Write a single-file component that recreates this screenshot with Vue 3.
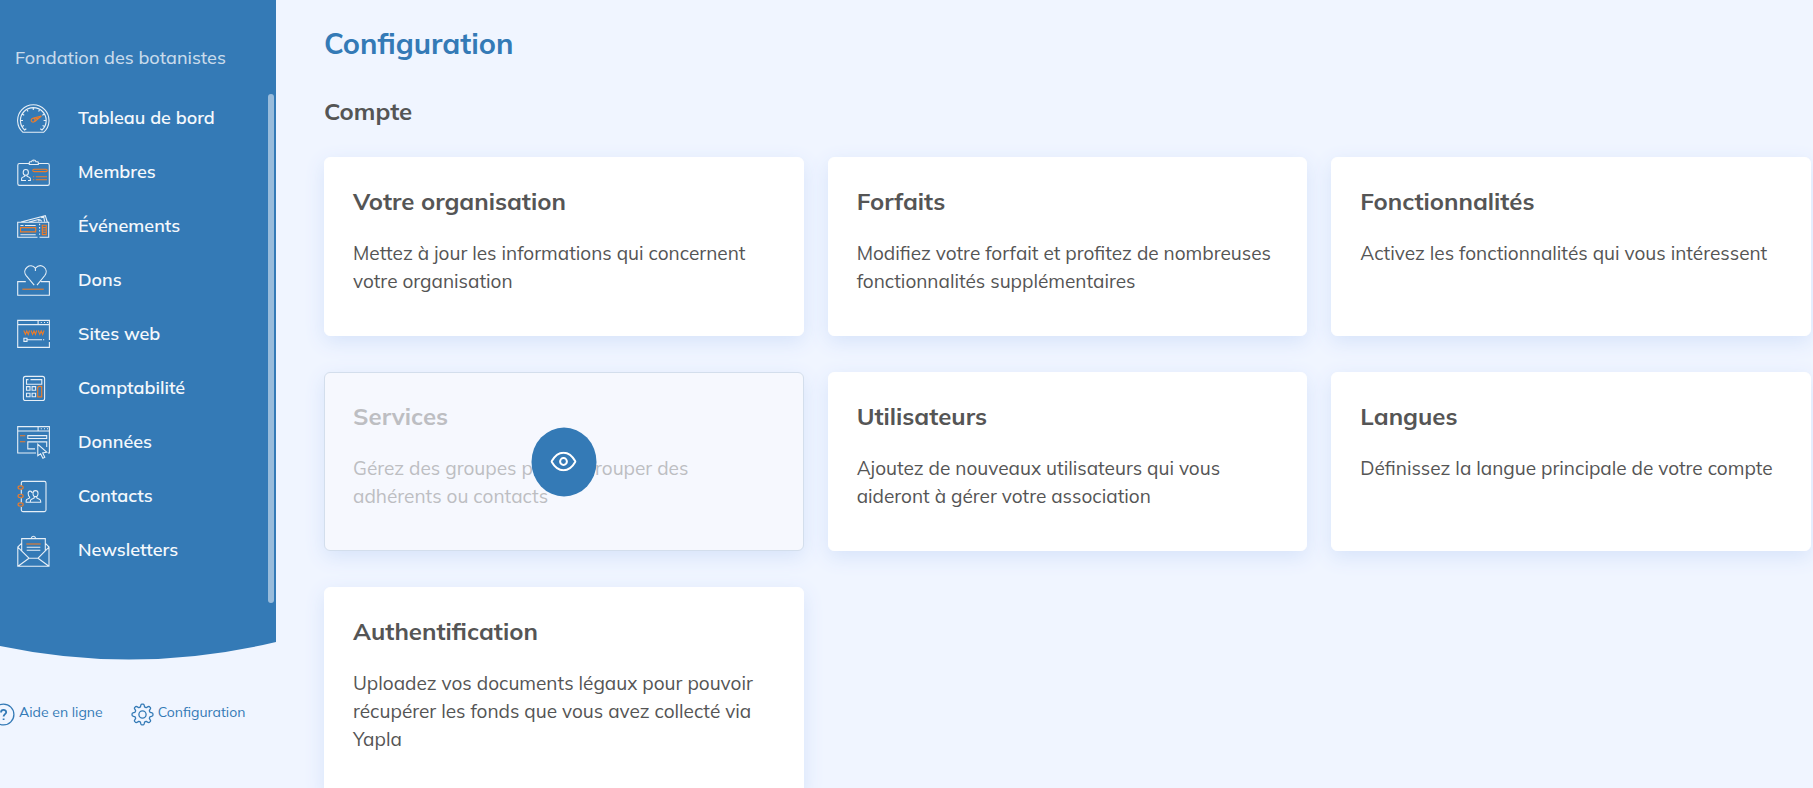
<script setup>
import { ref } from 'vue'

const organisation = ref('Fondation des botanistes')

// base = traits blancs, accent = traits orange
const menu = [
  {
    label: 'Tableau de bord',
    base: 'M6 31.3A15.7 15.7 0 1 1 26.6 31.3ZM9.3 27.8L7.6 29A12.9 12.9 0 1 1 25 29L23.3 27.8M16.3 6.6V9M9.8 8.2L11 10.4M22.8 8.2L21.6 10.4M5.1 13L7.2 14.2M27.5 13L25.4 14.2M3.4 19.5H6M29.2 19.5H26.6M5.1 25.5L7 24.6M27.5 25.5L25.6 24.6',
    accent: 'M14.2 19.2A1.9 1.9 0 1 0 18 19.2A1.9 1.9 0 1 0 14.2 19.2M15.6 17.3L24.4 15L17.8 20.6M18 18.2L21.5 16.6'
  },
  {
    label: 'Membres',
    base: 'M12 8.5H2.5Q.8 8.5 .8 10.2V28.7Q.8 30.4 2.5 30.4H30.6Q32.3 30.4 32.3 28.7V10.2Q32.3 8.5 30.6 8.5H21.5M12.3 9.5V7.5Q12.3 6.8 13.2 6.8H14.5A2.3 2.3 0 0 1 19 6.8H20.4Q21.3 6.8 21.3 7.5V9.5ZM16.7 5.8V6.4M6.2 17.4A2.6 2.9 0 1 1 11.4 17.4A2.6 2.9 0 1 1 6.2 17.4M7.8 19.8V21.2L5 22.6Q4.4 23.2 4.6 25.5H9M10 19.8V21.2L12.8 22.6Q13.6 23.2 13.4 25.5H11',
    accent: 'M17 14.2H29A1.2 1.2 0 0 1 29 16.6H17A1.2 1.2 0 0 1 17 14.2M16 21.7H17.2M18.8 21.7H30M16 24.8H17.2M18.8 24.8H30'
  },
  {
    label: 'Événements',
    base: 'M20.5 28.3H.7V13.3H31.7V28.3H22.5M4 13L28.3 6.6L30.3 13M12 13L22.5 10.2M24.2 8.8L26.8 8.2L27.6 12.5M21.4 12.2Q23 9.5 24.6 12.2M3.4 16.5H6.5M8 16.5H18.7M3.4 25.7H18.7M22.6 14.8V16.2M22.6 18V19.4M22.6 21.2V22.6M22.6 24.4V25.8',
    accent: 'M3.5 18.6H18.7V22.9H3.5ZM25.3 16.3H29.3V25.6H25.3ZM25.3 18.6H29.3M25.3 21H29.3M25.3 23.3H29.3'
  },
  {
    label: 'Dons',
    base: 'M8.8 18.6H.7V32.2H32.4V18.6H23.8M17.2 22.2L9.2 12.6C4.3 6.3 13.4-.9 18.4 5.2V8M18.4 5.2C24.2-.8 32.4 6 27.8 12.5L20 22.2',
    accent: 'M5.3 26.2H26.8'
  },
  {
    label: 'Sites web',
    base: 'M32.4 23V3.4H.7V30.4H32.4V25M.7 7.6H32.4M21.1 3.4V7.6M23.8 5.5H24.8M27 5.5H28M30 5.5H31M6.9 21.3H10V24.4H6.9ZM10 22.8H25M26 22.8H27.2',
    accent: 'M6.8 13.5L8.4 17.4L9.8 14L11.3 17.4L12.5 13.5M14 13.5L15.6 17.4L17 14L18.5 17.4L19.7 13.5M21.2 13.5L22.8 17.4L24.2 14L25.7 17.4L27 13.5'
  },
  {
    label: 'Comptabilité',
    base: 'M8.5 5.4H25.5Q27.6 5.4 27.6 7.5V27.4Q27.6 29.5 25.5 29.5H8.5Q6.4 29.5 6.4 27.4V7.5Q6.4 5.4 8.5 5.4M13.5 8.6H24.8V13.3H9.5V8.6H11.5M9.5 15.6H13V19.2H9.5ZM15.1 15.6H18.6V19.2H15.1ZM9.5 22.2H13V25.8H9.5ZM15.1 22.2H18.6V25.8H15.1Z',
    accent: 'M21.8 15.4H24.7V25.9H20.7V16.5Z'
  },
  {
    label: 'Données',
    base: 'M19 28H.7V1.6H32.4V28H31M.7 6H32.4M21.1 1.6V6M23.8 3.8H24.8M27 3.8H28M30 3.8H31M10.8 10.6H29.7V13.5H10.8ZM18 23.9H10.8V16.9H29.7V22M20.8 19.3V30.8L23.6 28.8L25.9 33.2L27.8 32.2L25.7 28L29.7 27.2Z',
    accent: 'M2.9 10.8H8.3M2.9 16.7H8.3'
  },
  {
    label: 'Contacts',
    base: 'M4.3 6.5V4Q4.3 2.4 5.9 2.4H27.4Q29 2.4 29 4V31Q29 32.6 27.4 32.6H5.9Q4.3 32.6 4.3 31V28M4.3 10.5V14.8M4.3 19.2V23.5M11.2 14.6C10.8 11.6 14.6 11.2 15 14M16 14.2C16 10.8 21 10.8 21 14.2C21 18.8 16 18.8 16 14.2M11.2 14.6Q11.2 17.4 12.6 18V19L9.6 20.6Q9 21.4 9.2 23.2H12.8M17.2 17.8V19L14.2 20.4Q13.2 21.2 13.3 23.2H23.7Q23.8 21.2 22.8 20.4L19.8 19V17.8',
    accent: 'M1 8.6A2.6 1.7 0 1 0 6.2 8.6A2.6 1.7 0 1 0 1 8.6M1 17A2.6 1.7 0 1 0 6.2 17A2.6 1.7 0 1 0 1 17M1 25.6A2.6 1.7 0 1 0 6.2 25.6A2.6 1.7 0 1 0 1 25.6'
  },
  {
    label: 'Newsletters',
    base: 'M4.7 18V5.6H28.3V18M14.2 5.4Q14.6 3.2 16.4 3.2T18.7 5.4M4.5 10.4L.8 14V33.3H32V14L28.4 10.4M.8 14.2L12 25.2H21L32 14.2M12 25.2L1 33.2M21 25.2L32 33.2M9.7 14.3H23.3M9.7 17.3H23.3',
    accent: 'M9.3 11H23.7'
  }
]

const cards = [
  { title: 'Votre organisation', text: 'Mettez à jour les informations qui concernent votre organisation' },
  { title: 'Forfaits', text: 'Modifiez votre forfait et profitez de nombreuses fonctionnalités supplémentaires' },
  { title: 'Fonctionnalités', text: 'Activez les fonctionnalités qui vous intéressent' },
  { title: 'Services', text: 'Gérez des groupes pour regrouper des adhérents ou contacts', active: true },
  { title: 'Utilisateurs', text: 'Ajoutez de nouveaux utilisateurs qui vous aideront à gérer votre association' },
  { title: 'Langues', text: 'Définissez la langue principale de votre compte' },
  { title: 'Authentification', text: 'Uploadez vos documents légaux pour pouvoir récupérer les fonds que vous avez collecté via Yapla' }
]

// contour de l'engrenage, 8 dents arrondies
const gearPath = () => {
  const points = []
  for (let i = 0; i < 96; i++) {
    const a = (i / 96) * Math.PI * 2
    const wave = Math.tanh(2.2 * Math.cos(8 * a))
    const r = 9.1 + 1.4 * wave
    points.push(`${(11.5 + r * Math.sin(a)).toFixed(2)} ${(11.5 - r * Math.cos(a)).toFixed(2)}`)
  }
  return `M${points.join('L')}Z`
}
const gear = gearPath()
</script>

<template>
  <div class="layout">
    <aside class="sidebar">
      <div class="sidebar-panel">
        <p class="org-name">{{ organisation }}</p>
        <nav class="menu">
          <a v-for="item in menu" :key="item.label" href="#" class="menu-item">
            <svg class="menu-icon" viewBox="0 0 34 34" aria-hidden="true">
              <path class="base" :d="item.base" />
              <path class="accent" :d="item.accent" />
            </svg>
            <span class="menu-label">{{ item.label }}</span>
          </a>
        </nav>
        <span class="menu-scroll"></span>
      </div>
      <svg class="sidebar-curve" viewBox="0 0 276 18" preserveAspectRatio="none" aria-hidden="true">
        <path d="M0 0V4Q138 33 276 0Z" />
      </svg>

      <div class="sidebar-footer">
        <a href="#" class="footer-link">
          <svg class="footer-icon" viewBox="0 0 23 23" aria-hidden="true">
            <circle cx="11.5" cy="11.5" r="10.4" />
            <path class="thick" d="M9 9.4C9 6.2 14.2 6.2 14.2 9.2C14.2 11.2 11.6 11.2 11.6 13.6M11.6 15.4V17" />
          </svg>
          <span class="footer-label">Aide en ligne</span>
        </a>
        <a href="#" class="footer-link">
          <svg class="footer-icon" viewBox="0 0 23 23" aria-hidden="true">
            <path :d="gear" />
            <circle cx="11.5" cy="11.5" r="3.6" />
          </svg>
          <span class="footer-label">Configuration</span>
        </a>
      </div>
    </aside>

    <main class="content">
      <h1 class="page-title">Configuration</h1>
      <h2 class="section-title">Compte</h2>
      <div class="card-grid">
        <article v-for="card in cards" :key="card.title" class="card" :class="{ active: card.active }">
          <h3 class="card-title">{{ card.title }}</h3>
          <p class="card-text">{{ card.text }}</p>
          <a v-if="card.active" href="#" class="card-view" :aria-label="card.title">
            <svg viewBox="0 0 26 20" aria-hidden="true">
              <path d="M1 10C3.5 5.5 6.8 1.2 13 1.2S22.5 5.5 25 10C22.5 14.5 19.2 18.8 13 18.8S3.5 14.5 1 10Z" />
              <circle cx="13" cy="10" r="3.4" />
            </svg>
          </a>
        </article>
      </div>
    </main>
  </div>
</template>

<style>
body {
  margin: 0;
  background: #f0f5ff;
}
</style>

<style scoped>
.layout {
  display: flex;
  height: 100vh;
  overflow: hidden;
  background: #f0f5ff;
  color: #555;
  font-family: Mulish, Muli, Lato, sans-serif;
}

.sidebar {
  flex: 0 0 276px;
}

.sidebar-panel {
  position: relative;
  padding-bottom: 65px;
  background: #347ab6;
}

.org-name {
  margin: 0;
  padding: 44px 15px 19px;
  font-size: 18px;
  font-weight: 500;
  line-height: 28px;
  color: #c8daeb;
}

.menu-item {
  display: flex;
  align-items: center;
  gap: 27px;
  height: 54px;
  padding-left: 17px;
  font-size: 18px;
  font-weight: 600;
  color: #f4f8fc;
  text-decoration: none;
}

.menu-label {
  padding-bottom: 1px;
}

.menu-icon {
  width: 34px;
  height: 34px;
  fill: none;
  stroke-width: 1.1;
}

.menu-icon .base {
  stroke: #e6eff7;
}

.menu-icon .accent {
  stroke: #ee7c28;
}

.menu-scroll {
  position: absolute;
  top: 94px;
  right: 2px;
  bottom: 39px;
  width: 6px;
  border-radius: 3px;
  background: #99bcdb;
}

.sidebar-curve {
  display: block;
  width: 100%;
  height: 18px;
  fill: #347ab6;
}

.sidebar-footer {
  display: flex;
  gap: 28px;
  margin: 40px 0 0 -8px;
}

.footer-link {
  display: flex;
  align-items: center;
  gap: 4px;
  font-size: 14px;
  line-height: 24px;
  color: #347ab6;
  text-decoration: none;
  white-space: nowrap;
}

.footer-label {
  padding-bottom: 4px;
}

.footer-icon {
  width: 23px;
  height: 23px;
  fill: none;
  stroke: #347ab6;
  stroke-width: 1.3;
}

.footer-icon .thick {
  stroke-width: 1.8;
}

.content {
  flex: 1;
  min-width: 0;
  padding: 23px 2px 24px 48px;
}

.page-title {
  margin: 0;
  font-size: 29px;
  font-weight: 700;
  line-height: 40px;
  color: #347ab6;
}

.section-title {
  margin: 32px 0 30px;
  font-size: 24px;
  font-weight: 700;
  line-height: 32px;
}

.card-grid {
  display: grid;
  grid-template-columns: repeat(3, 1fr);
  gap: 36px 24px;
}

.card {
  position: relative;
  box-sizing: border-box;
  padding: 27px 28px 40px;
  border: 1px solid #fff;
  border-radius: 6px;
  background: #fff;
  box-shadow: 0 6px 20px #d6e3fa;
}

.card-title {
  margin: 0 0 22px;
  font-size: 24px;
  font-weight: 700;
  line-height: 32px;
}

.card-text {
  margin: 0;
  font-size: 19px;
  font-weight: 400;
  line-height: 28px;
}

.card.active {
  border-color: #d3deec;
  background: #f6f8fe;
  color: #bdbec2;
}

.card-view {
  position: absolute;
  top: 50%;
  left: 50%;
  display: flex;
  align-items: center;
  justify-content: center;
  width: 65px;
  height: 69px;
  border-radius: 50%;
  background: #347ab6;
  transform: translate(-50%, -50%);
}

.card-view svg {
  width: 26px;
  height: 20px;
  fill: none;
  stroke: #fff;
  stroke-width: 2;
}
</style>
